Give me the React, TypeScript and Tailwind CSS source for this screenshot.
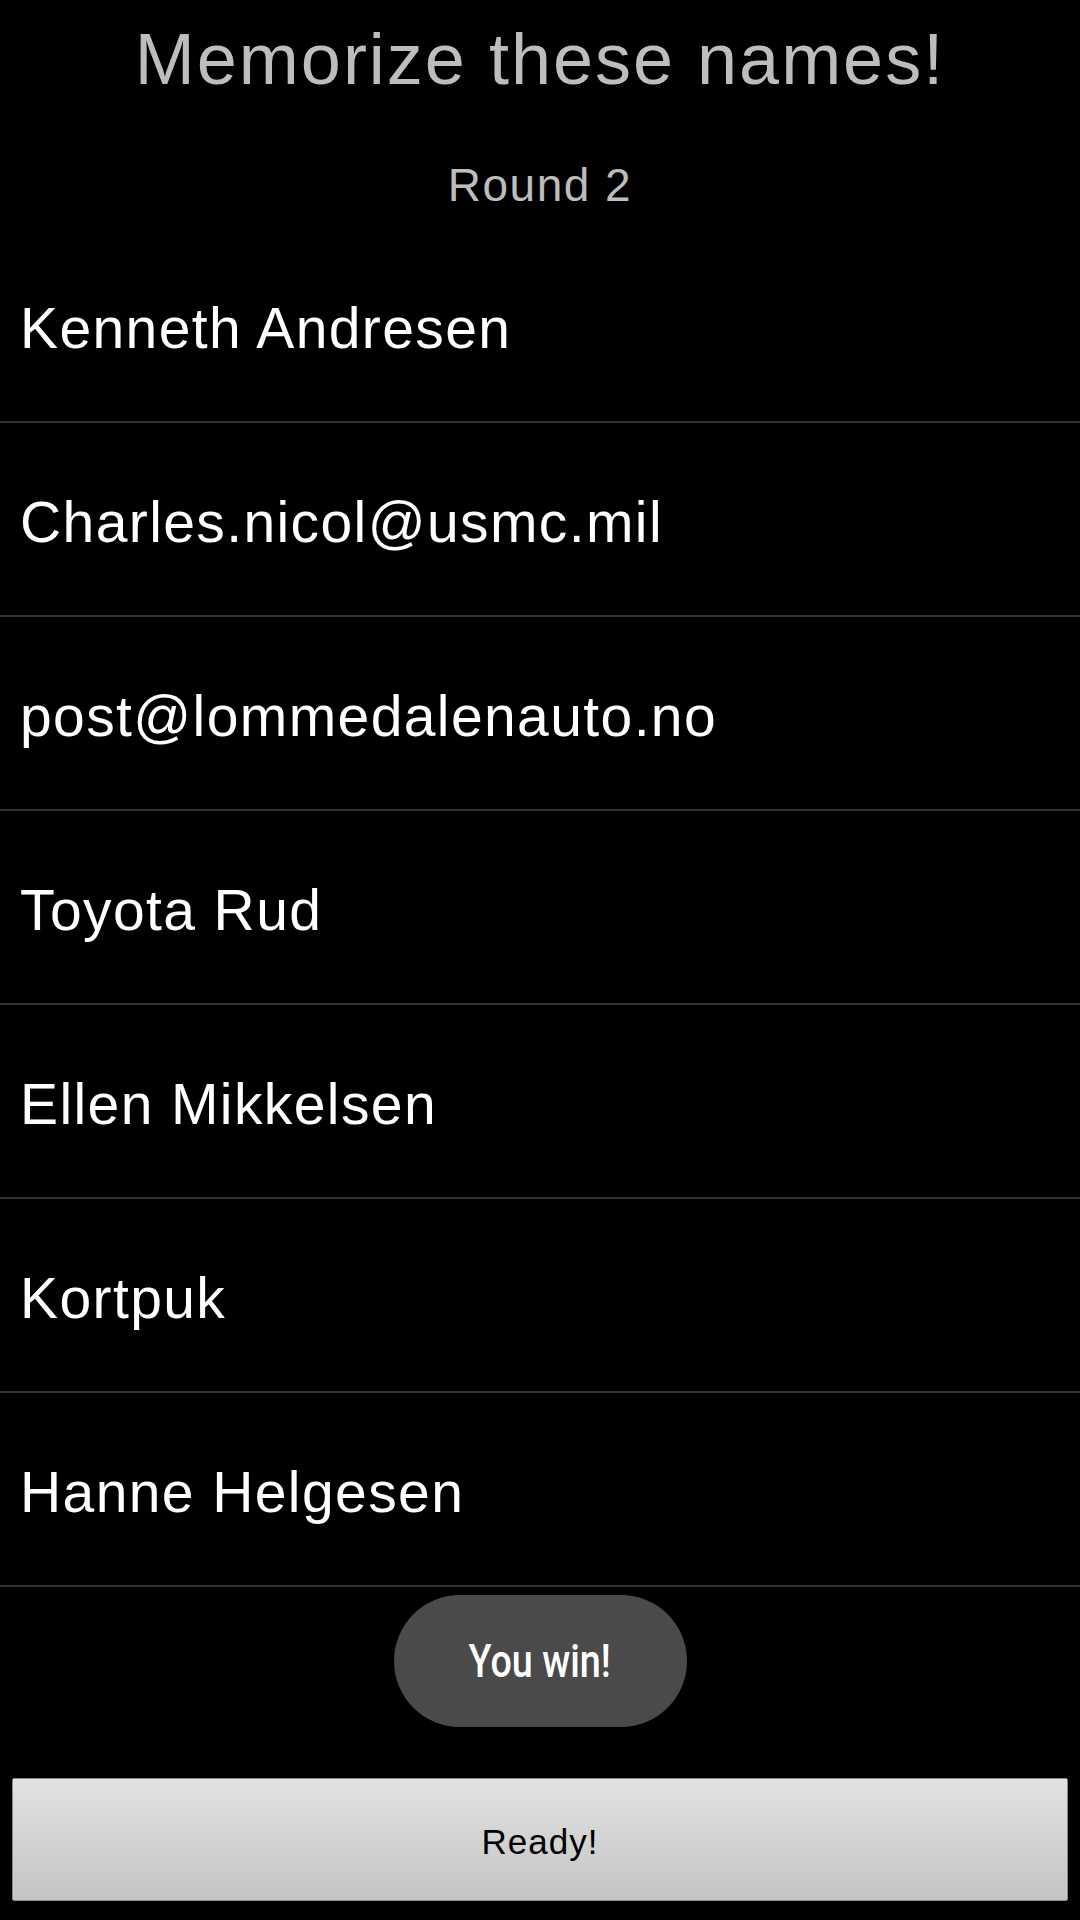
import React from "react";

const names = [
  "Kenneth Andresen",
  "Charles.nicol@usmc.mil",
  "post@lommedalenauto.no",
  "Toyota Rud",
  "Ellen Mikkelsen",
  "Kortpuk",
  "Hanne Helgesen",
];

export default function App() {
  return (
    <div
      className="w-[1080px] h-[1920px] bg-black flex flex-col overflow-hidden"
      style={{ fontFamily: '"Liberation Sans", Arial, sans-serif' }}
    >
      <div className="h-[229px] flex flex-col items-center">
        <div className="h-[112px] pt-[5px] flex items-center justify-center text-[72px] tracking-[2px] text-[#bdbdbd] leading-none">
          Memorize these names!
        </div>
        <div className="mt-[38px] h-[70px] flex items-center justify-center text-[46px] tracking-[1.5px] text-[#bdbdbd] leading-none">
          Round 2
        </div>
      </div>
      {names.map((n) => (
        <div
          key={n}
          className="h-[194px] border-b-2 border-[#333333] flex items-center px-[20px] pt-[7px] text-[57px] tracking-[1.4px] text-white leading-none"
        >
          {n}
        </div>
      ))}
      <div className="flex justify-center mt-[8px]">
        <div
          className="w-[293px] h-[132px] rounded-full bg-[#4a4a4a] flex items-center justify-center text-white text-[46px] leading-none"
          style={{ fontFamily: 'Roboto, "Liberation Sans", sans-serif' }}
        >
          <span className="inline-block scale-x-[0.82] font-medium">You win!</span>
        </div>
      </div>
      <div className="mt-[51px] mx-[12px] h-[123px] pt-[4px] rounded-[2px] border border-[#8a8a8a] bg-gradient-to-b from-[#e2e2e2] to-[#c4c4c4] flex items-center justify-center text-black text-[35px] tracking-[1px] leading-none">
        Ready!
      </div>
    </div>
  );
}
